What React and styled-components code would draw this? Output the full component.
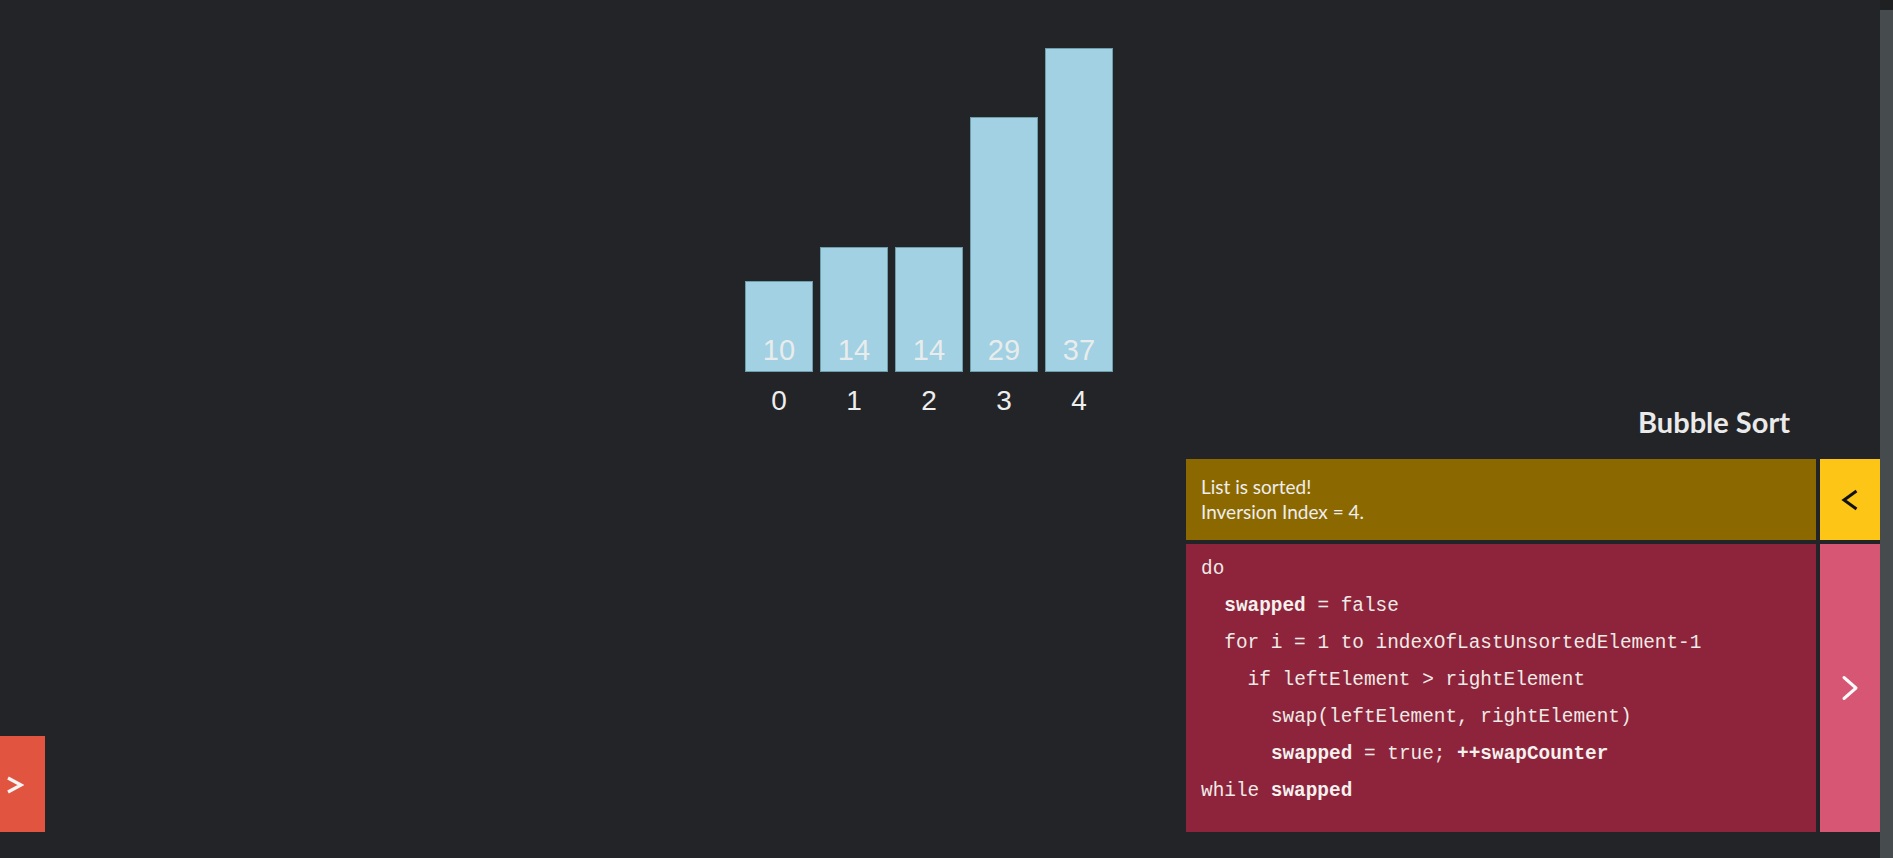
import styled, { createGlobalStyle } from "styled-components";

const GlobalStyle = createGlobalStyle`
  html, body {
    margin: 0;
    padding: 0;
    background: #232427;
    overflow: hidden;
  }
  * {
    box-sizing: border-box;
  }
`;

const bars = [
  { value: 10, height: 91 },
  { value: 14, height: 125 },
  { value: 14, height: 125 },
  { value: 29, height: 255 },
  { value: 37, height: 324 },
];

const code = [
  { indent: 0, parts: [["do", false]] },
  { indent: 1, parts: [["swapped", true], [" = false", false]] },
  { indent: 1, parts: [["for i = 1 to indexOfLastUnsortedElement-1", false]] },
  { indent: 2, parts: [["if leftElement > rightElement", false]] },
  { indent: 3, parts: [["swap(leftElement, rightElement)", false]] },
  {
    indent: 3,
    parts: [
      ["swapped", true],
      [" = true; ", false],
      ["++swapCounter", true],
    ],
  },
  { indent: 0, parts: [["while ", false], ["swapped", true]] },
];

function App() {
  return (
    <>
      <GlobalStyle />
      <Screen>
        <Main>
          <Chart>
            <Bars>
              {bars.map((b, i) => (
                <Column key={i}>
                  <Bar style={{ height: b.height }}>
                    <BarValue>{b.value}</BarValue>
                  </Bar>
                  <Index>{i}</Index>
                </Column>
              ))}
            </Bars>
          </Chart>

          <Bottom>
            <SideButton>
              <svg width="18" height="18" viewBox="0 0 18 18">
                <polyline
                  points="2,2 15,9 2,16"
                  fill="none"
                  stroke="#f4f4f4"
                  strokeWidth="3.2"
                  strokeLinejoin="miter"
                />
              </svg>
            </SideButton>

            <Panel>
              <Title>Bubble Sort</Title>
              <Row>
                <Status>
                  List is sorted!
                  <br />
                  Inversion Index = 4.
                </Status>
                <NavButton $bg="#fdc515">
                  <svg width="18" height="22" viewBox="0 0 18 22">
                    <polyline
                      points="15.5,2 3,11 15.5,20"
                      fill="none"
                      stroke="#111"
                      strokeWidth="3"
                    />
                  </svg>
                </NavButton>
              </Row>
              <Row>
                <Code>
                  {code.map((line, i) => (
                    <CodeLine key={i} $indent={line.indent}>
                      {line.parts.map(([t, bold], j) =>
                        bold ? <b key={j}>{t}</b> : <span key={j}>{t}</span>
                      )}
                    </CodeLine>
                  ))}
                </Code>
                <NavButton $bg="#d65674">
                  <svg width="18" height="26" viewBox="0 0 18 26">
                    <polyline
                      points="3,2.5 15,13 3,23.5"
                      fill="none"
                      stroke="#fafafa"
                      strokeWidth="3"
                      strokeLinecap="round"
                      strokeLinejoin="round"
                    />
                  </svg>
                </NavButton>
              </Row>
            </Panel>
          </Bottom>
        </Main>
        <Scrollbar>
          <Thumb />
        </Scrollbar>
      </Screen>
    </>
  );
}

const Screen = styled.div`
  display: flex;
  width: 100vw;
  height: 858px;
  background: #232427;
`;

const Main = styled.div`
  flex: 1;
  display: grid;
  grid-template: 1fr / 1fr;
  height: 100%;

  & > * {
    grid-area: 1 / 1;
  }
`;

const Chart = styled.div`
  align-self: start;
  display: flex;
  justify-content: center;
  padding-top: 48px;
  padding-right: 22px;
`;

const Bars = styled.div`
  display: flex;
  gap: 7px;
  align-items: flex-end;
`;

const Column = styled.div`
  width: 68px;
  display: flex;
  flex-direction: column;
  align-items: stretch;
`;

const Bar = styled.div`
  background: #a1d1e2;
  border: 1px solid #6d9eac;
  display: flex;
  align-items: flex-end;
  justify-content: center;
  padding-bottom: 6px;
`;

const BarValue = styled.span`
  font-family: "Liberation Sans", Arial, sans-serif;
  font-size: 29px;
  line-height: 1;
  color: #e9ecec;
`;

const Index = styled.div`
  margin-top: 15px;
  text-align: center;
  font-family: "Liberation Sans", Arial, sans-serif;
  font-size: 28px;
  line-height: 28px;
  height: 28px;
  color: #eeeeee;
`;

const Bottom = styled.div`
  align-self: end;
  display: flex;
  justify-content: space-between;
  align-items: flex-end;
  padding-bottom: 26px;
`;

const SideButton = styled.div`
  width: 45px;
  height: 96px;
  background: #e05440;
  display: flex;
  align-items: center;
  padding-left: 6px;
  padding-top: 2px;
`;

const Panel = styled.div`
  width: 694px;
  display: flex;
  flex-direction: column;
  gap: 4px;
`;

const Title = styled.div`
  font-family: Lato, "Open Sans", sans-serif;
  font-weight: 700;
  font-size: 29px;
  line-height: 36px;
  color: #eaeaea;
  text-align: right;
  padding-right: 90px;
  margin-bottom: 15px;
`;

const Row = styled.div`
  display: grid;
  grid-template-columns: 630px 60px;
  gap: 4px;
`;

const Status = styled.div`
  height: 81px;
  background: #8c6900;
  padding: 15px 15px;
  font-family: Lato, "Open Sans", sans-serif;
  font-size: 19px;
  line-height: 25px;
  color: #eeeeee;
`;

const NavButton = styled.div`
  background: ${(p) => p.$bg};
  display: flex;
  align-items: center;
  justify-content: center;
`;

const Code = styled.div`
  height: 288px;
  background: #8e233c;
  padding: 7px 15px 0;
  font-family: "Liberation Mono", "Courier New", monospace;
  font-size: 19.4px;
  color: #eeeae6;
`;

const CodeLine = styled.div`
  line-height: 37px;
  white-space: pre;
  padding-left: ${(p) => p.$indent * 23.3}px;

  b {
    font-weight: 700;
    color: #f4f1ee;
  }
`;

const Scrollbar = styled.div`
  width: 13px;
  background: #1e2022;
  padding-top: 10px;
  display: flex;
`;

const Thumb = styled.div`
  flex: 1;
  background: #464b4e;
`;

export default App;
